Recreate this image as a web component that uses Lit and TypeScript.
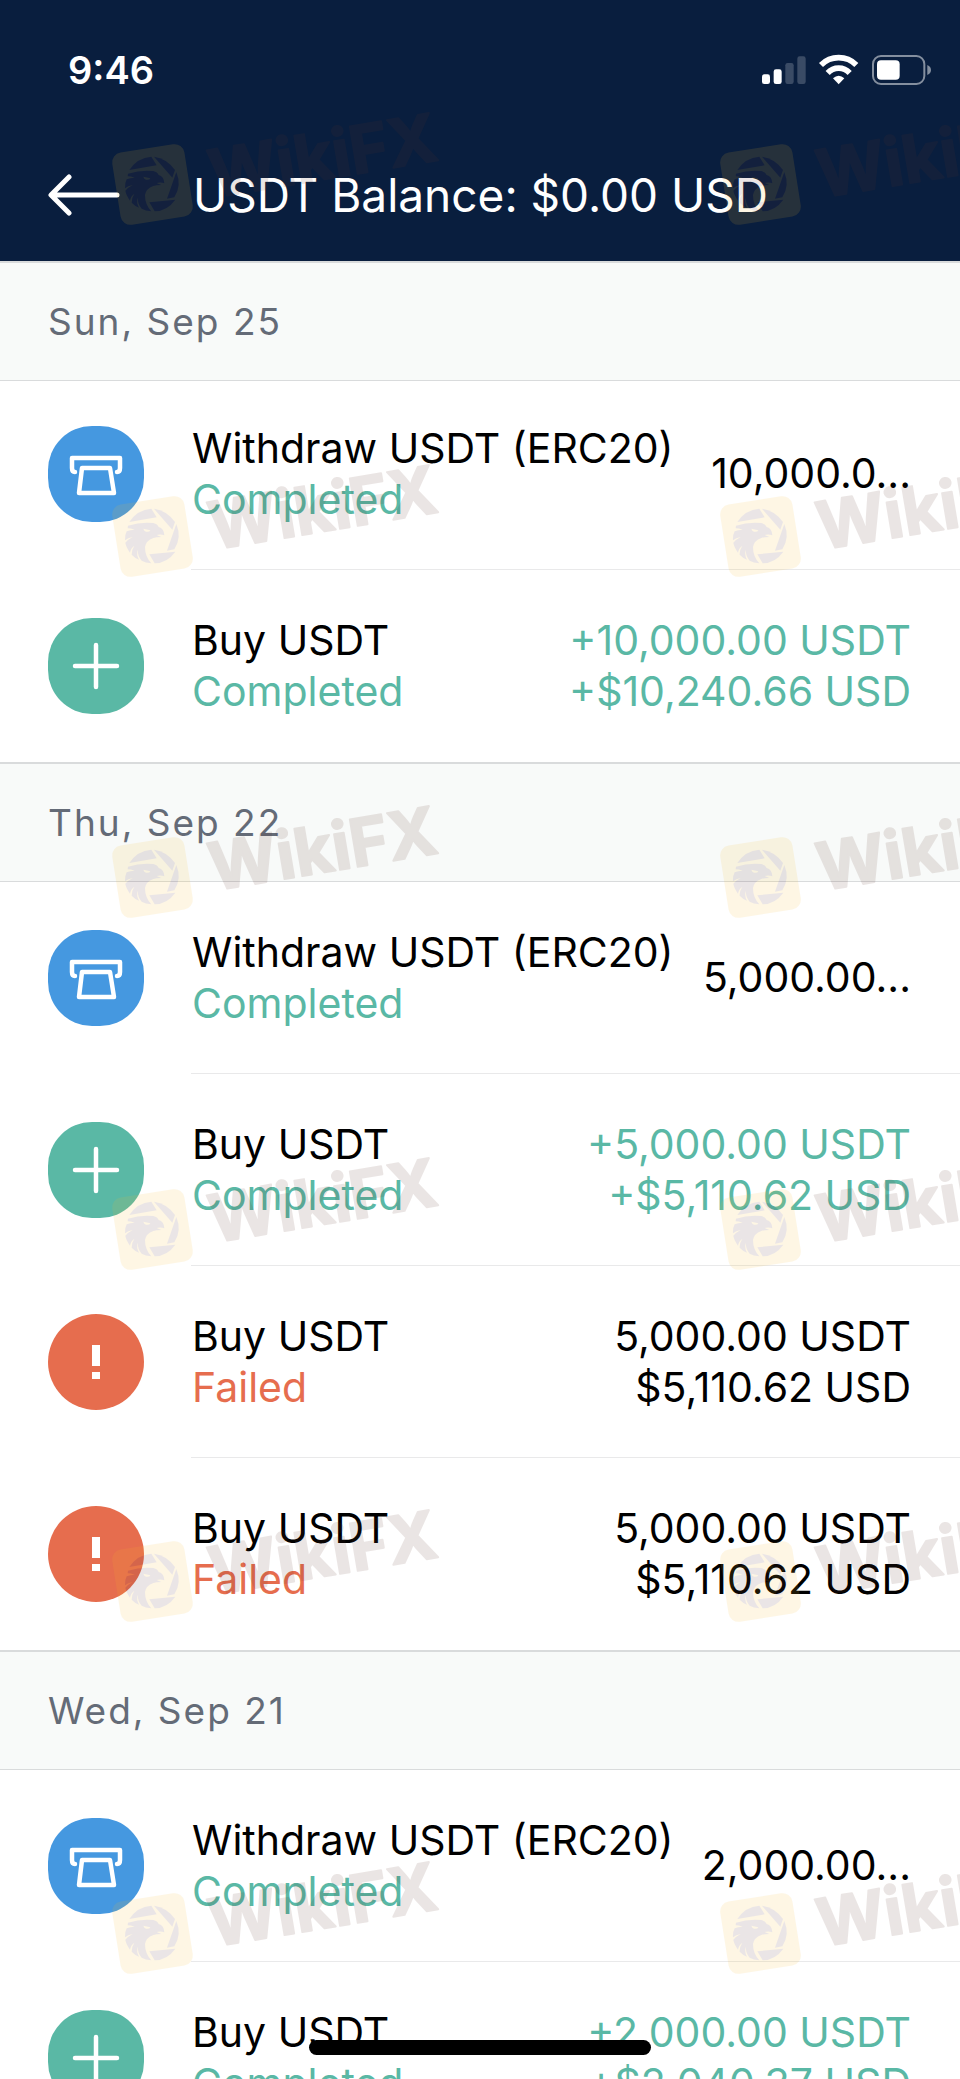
import { LitElement, html, svg, css } from 'lit';
import { customElement } from 'lit/decorators.js';

type Kind = 'withdraw' | 'buy' | 'failed';
interface Entry { kind: Kind; title: string; status: string; amounts: string[]; }
interface Group { date: string; pinned?: boolean; entries: Entry[]; }

const withdraw = (amount: string): Entry => ({ kind: 'withdraw', title: 'Withdraw USDT (ERC20)', status: 'Completed', amounts: [amount] });
const buy = (coin: string, usd: string): Entry => ({ kind: 'buy', title: 'Buy USDT', status: 'Completed', amounts: [coin, usd] });
const failed = (coin: string, usd: string): Entry => ({ kind: 'failed', title: 'Buy USDT', status: 'Failed', amounts: [coin, usd] });

const groups: Group[] = [
  { date: 'Sun, Sep 25', pinned: true, entries: [withdraw('10,000.0...'), buy('+10,000.00 USDT', '+$10,240.66 USD')] },
  {
    date: 'Thu, Sep 22',
    entries: [
      withdraw('5,000.00...'),
      buy('+5,000.00 USDT', '+$5,110.62 USD'),
      failed('5,000.00 USDT', '$5,110.62 USD'),
      failed('5,000.00 USDT', '$5,110.62 USD'),
    ],
  },
  { date: 'Wed, Sep 21', entries: [withdraw('2,000.00...'), buy('+2,000.00 USDT', '+$2,040.37 USD')] },
];

const glyphs = {
  withdraw: svg`<g fill="none" stroke="#fff" stroke-width="4.500" stroke-linecap="round" stroke-linejoin="round">
    <path d="M27 46 Q24 46 24 42 V32 H72 V42 Q72 46 69 46"/>
    <path d="M34 42 H62 L66 67 H31 Z"/></g>`,
  buy: svg`<path d="M48 27 V69 M27 48 H69" stroke="#fff" stroke-width="4.500" stroke-linecap="round"/>`,
  failed: svg`<path d="M44 31 H52 V52 H44 Z M44 58 H52 V65 H44 Z" fill="#fff"/>`,
};

@customElement('app-root')
export class AppRoot extends LitElement {
  static styles = css`
    :host { display: block; position: relative; height: 100vh; overflow: hidden; background: #fff; color: #000;
      font-family: Inter, "Liberation Sans", sans-serif; font-size: 41px; line-height: 51px; }
    * { box-sizing: border-box; }
    .top { background: #091e3e; color: #fff; padding: 43px 26px 18px 48px; }
    .status { display: flex; align-items: center; justify-content: space-between; height: 54px; padding-left: 20px; }
    .time { font-size: 38px; font-weight: 600; }
    .nav { display: flex; align-items: center; height: 96px; margin-top: 50px; gap: 73px; }
    .back { display: block; width: 72px; height: 48px; padding: 0; border: 0; background: none; }
    .back svg, .status svg, .icon svg { display: block; }
    h1 { margin: 0; font-size: 46px; line-height: 60px; font-weight: 400; white-space: nowrap; }
    h2 { margin: 0; height: 120px; padding: 33px 48px 0; border-top: 2px solid #d9dbdc; border-bottom: 1px solid #d9dbdc;
      background: #f8faf9; color: #646b77; font-size: 37px; line-height: 51px; font-weight: 400; letter-spacing: 2px; }
    .pinned { position: relative; z-index: 1; margin-bottom: -3px; }
    ul { margin: 0; padding: 0; list-style: none; }
    .row { display: flex; align-items: center; height: 192px; padding-left: 48px; }
    .icon { flex: none; width: 96px; height: 96px; border-radius: 44px; margin-right: 47px; }
    .icon.withdraw { background: #4598e0; }
    .icon.buy { background: #5ab8a5; }
    .icon.failed { background: #e66d4e; border-radius: 50%; }
    .body { flex: 1; min-width: 0; align-self: stretch; display: flex; align-items: center; justify-content: space-between;
      padding: 0 49px 0 1px; border-bottom: 1px solid #e9e9ea; }
    .row:last-child .body { border-bottom: 0; }
    .body p { margin: 0; white-space: nowrap; }
    .amounts { text-align: right; }
    .good { color: #5ab8a5; }
    .bad { color: #e66d4e; }
    .marks { position: absolute; inset: 0; width: 100%; height: 100%; pointer-events: none; z-index: 2; }
    .mark-text { font-size: 66px; font-weight: 700; fill: #5d3228; stroke: #5d3228; stroke-width: 2px; stroke-linejoin: round; }
    .home { position: absolute; z-index: 3; left: 50%; bottom: 24px; width: 342px; height: 15px; border-radius: 8px;
      background: #000; transform: translateX(-50%); }
  `;

  private row(e: Entry) {
    const tone = e.kind === 'failed' ? 'bad' : 'good';
    return html`<li class="row">
      <div class="icon ${e.kind}"><svg width="96" height="96" viewBox="0 0 96 96" aria-hidden="true">${glyphs[e.kind]}</svg></div>
      <div class="body">
        <div><p>${e.title}</p><p class=${tone}>${e.status}</p></div>
        <div class="amounts ${e.kind === 'buy' ? 'good' : ''}">${e.amounts.map((a) => html`<p>${a}</p>`)}</div>
      </div>
    </li>`;
  }

  private mark(x: number, y: number) {
    return svg`<g transform="translate(${x} ${y})" opacity="0.12">
      <rect x="4" y="4" width="73" height="73" rx="10" transform="rotate(-9 40.500 40.500)" fill="#f7bb2a"/>
      <g transform="scale(.3333) translate(-12 -15)" fill="#5d323c">
        <path d="M64 93 Q88 56 130 53 L146 79 Z"/>
        <path d="M138 53 Q176 58 201 93 L193 116 Z"/>
        <path d="M205 99 Q222 140 199 175 L177 179 Z"/>
        <path d="M202 182 Q178 216 140 217 L124 190 Z"/>
        <path d="M60 104 Q98 92 136 96 Q149 99 152 108 Q168 112 169 133 Q158 129 146 132 L160 138 Q144 138 136 141 Q114 149 111 168 Q111 197 130 217 Q112 216 101 209 Q88 194 90 176 Q84 190 93 206 Q80 201 71 191 Q70 178 79 164 Q68 172 66 185 Q54 168 52 155 Q59 146 74 138 Q60 140 51 148 Q50 132 56 121 Q66 116 80 116 Q68 112 59 112 Z"/>
        <path fill="#f7bb2a" d="M106 113 L127 118 Q124 124 114 122 Q108 120 106 113 Z"/>
      </g>
      <text class="mark-text" transform="translate(101 54) rotate(-9.500)">WikiFX</text>
    </g>`;
  }

  render() {
    return html`
      <header class="top">
        <div class="status">
          <span class="time">9:46</span>
          <svg width="172" height="32" viewBox="0 0 516 96" role="img" aria-label="Signal, Wi-Fi and battery">
            <g fill="#fff" transform="translate(-21 -27)">
              <rect x="21" y="88" width="24" height="29" rx="7"/>
              <rect x="56" y="73" width="24" height="44" rx="7"/>
              <g opacity=".2"><rect x="91" y="54" width="25" height="63" rx="7"/><rect x="127" y="34" width="25" height="83" rx="7"/></g>
              <g fill="none" stroke="#fff" stroke-width="17">
                <path d="M198 60 A75 75 0 0 1 304 60"/>
                <path d="M218 84 A45 45 0 0 1 284 84"/>
              </g>
              <path d="M234 100 Q251 85 268 100 L251 118 Z"/>
              <g opacity=".5">
                <rect x="354" y="33" width="154" height="84" rx="24" fill="none" stroke="#fff" stroke-width="6"/>
                <path d="M517 60 Q528 65 528 75 Q528 85 517 90 Z"/>
              </g>
              <rect x="366" y="46" width="68" height="58" rx="12"/>
            </g>
          </svg>
        </div>
        <div class="nav">
          <button class="back" aria-label="Back">
            <svg width="72" height="48" viewBox="0 0 72 48"><path d="M69 24 H4 M21 6 L3 24 L21 42" fill="none" stroke="#fff" stroke-width="5" stroke-linecap="round" stroke-linejoin="round"/></svg>
          </button>
          <h1>USDT Balance: $0.00 USD</h1>
        </div>
      </header>
      <main>
        ${groups.map((g) => html`<section>
          <h2 class=${g.pinned ? 'pinned' : ''}>${g.date}</h2>
          <ul>${g.entries.map((e) => this.row(e))}</ul>
        </section>`)}
      </main>
      <svg class="marks" aria-hidden="true">
        ${[144, 496, 837, 1189, 1541, 1893].map((y) => [112, 720].map((x) => this.mark(x, y)))}
      </svg>
      <div class="home"></div>
    `;
  }
}
